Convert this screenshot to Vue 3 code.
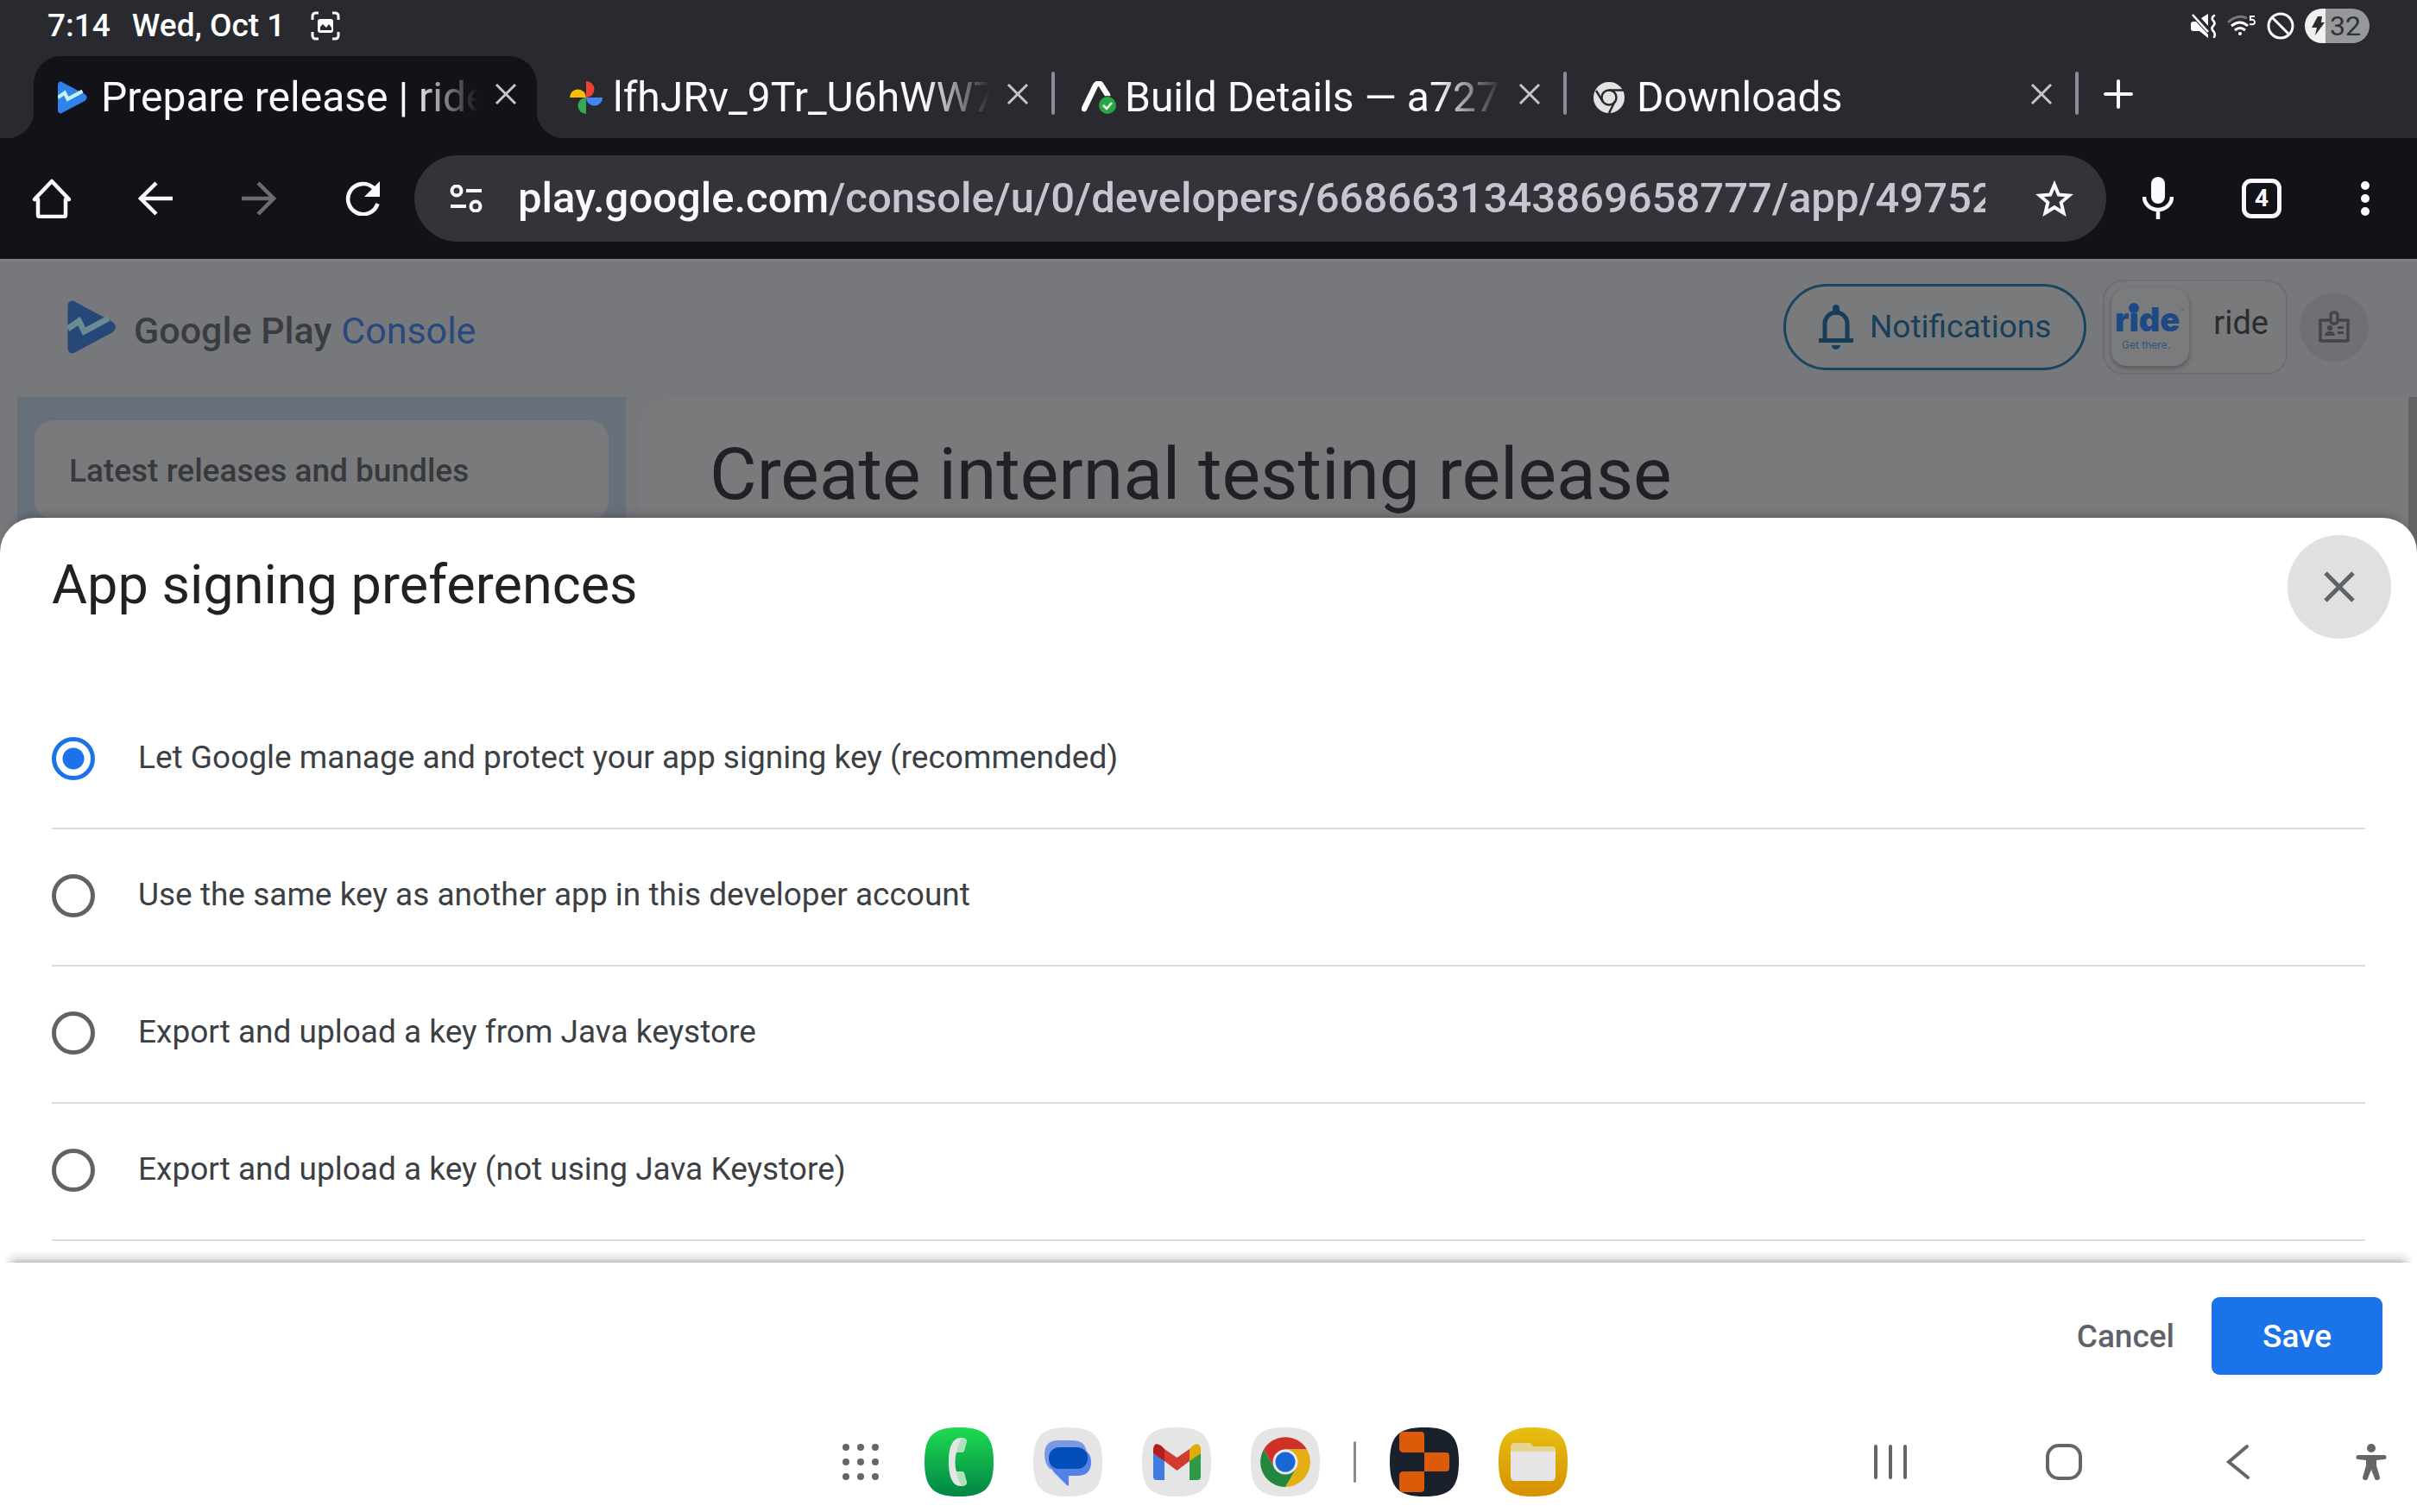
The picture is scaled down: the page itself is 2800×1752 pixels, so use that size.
<script setup>
import { ref } from 'vue'

const tabs = [
  { icon: 'play', title: 'Prepare release | ride', active: true },
  { icon: 'photos', title: 'lfhJRv_9Tr_U6hWW7_' },
  { icon: 'build', title: 'Build Details — a7277' },
  { icon: 'chrome', title: 'Downloads' }
]

const options = [
  { id: 'google', label: 'Let Google manage and protect your app signing key (recommended)' },
  { id: 'same', label: 'Use the same key as another app in this developer account' },
  { id: 'java', label: 'Export and upload a key from Java keystore' },
  { id: 'other', label: 'Export and upload a key (not using Java Keystore)' }
]
const selected = ref('google')
</script>

<template>
  <div class="screen">
    <header class="status">
      <div class="status-left">
        <span>7:14</span>
        <span>Wed, Oct 1</span>
        <svg class="capture" width="34" height="34" viewBox="0 0 34 34">
          <path d="M2 10V6q0-4 4-4h3M25 2h3q4 0 4 4v4M32 24v4q0 4-4 4h-3M9 32H6q-4 0-4-4v-4" fill="none" stroke="#fff" stroke-width="3" />
          <rect x="8" y="9" width="18" height="16" rx="3" fill="#fff" />
          <path d="M11 22v-4l3-3 4 4 3-4 3 4v3z" fill="#292a2f" />
        </svg>
      </div>
      <div class="status-right">
        <svg width="30" height="28" viewBox="0 0 30 28">
          <path d="M0 12q0-3 3-3h3l14 15v4l-10-8H3q-3 0-3-3zM12 5l8-5v14z" fill="#fff" />
          <path d="M2 1l18 20" stroke="#fff" stroke-width="2.600" />
          <path d="M27 2q-4 3-1 6t0 6 0 6 1 7" fill="none" stroke="#fff" stroke-width="2.600" stroke-linecap="round" />
        </svg>
        <svg class="wifi" width="34" height="26" viewBox="0 0 34 26">
          <path d="M1 9Q12-1 23 4" fill="none" stroke="#77787c" stroke-width="3" />
          <path d="M5 13q10-8 19 0M9 18q6-5 12 0" fill="none" stroke="#fff" stroke-width="3" />
          <circle cx="15" cy="22" r="2" fill="#fff" />
          <path d="M32 2h-5v4q5-1 5 3 0 3-6 2" fill="none" stroke="#fff" stroke-width="2" />
        </svg>
        <svg width="32" height="32" viewBox="0 0 32 32">
          <circle cx="16" cy="16" r="14" fill="none" stroke="#fff" stroke-width="3" />
          <path d="M6 6l20 20" stroke="#fff" stroke-width="3" />
        </svg>
        <div class="battery">
          <svg width="16" height="22" viewBox="0 0 16 22"><path d="M7 0h5l-1 7h4L4 22l2-9H0z" fill="#2b2c30" /></svg>
          <span>32</span>
        </div>
      </div>
    </header>

    <nav class="tabs" aria-label="Browser tabs">
      <div v-for="t in tabs" :key="t.title" class="tab" :class="{ active: t.active }">
        <span class="fav">
          <svg v-if="t.icon === 'play'" width="34" height="38" viewBox="0 0 56 62">
            <path d="M0 7C0 1 5-1 9 2l43 23q7 6 0 12L9 60c-4 3-9 1-9-5z" fill="#2f81ec" />
            <path d="M0 31l13-9 6 12 28-15" fill="none" stroke="#c6f0f7" stroke-width="7" />
          </svg>
          <svg v-else-if="t.icon === 'photos'" width="38" height="38" viewBox="0 0 38 38">
            <path d="M19 0a9.500 9.500 0 0 1 0 19z" fill="#ea4335" />
            <path d="M38 19a9.500 9.500 0 0 1-19 0z" fill="#4285f4" />
            <path d="M19 38a9.500 9.500 0 0 1 0-19z" fill="#34a853" />
            <path d="M0 19a9.500 9.500 0 0 1 19 0z" fill="#fbbc04" />
          </svg>
          <svg v-else-if="t.icon === 'build'" width="40" height="38" viewBox="0 0 40 38">
            <path d="M3 32L16 5q4-5 7 0l7 11" fill="none" stroke="#fff" stroke-width="6.500" stroke-linecap="round" />
            <circle cx="30" cy="28" r="11" fill="#292a2f" />
            <circle cx="30" cy="28" r="10" fill="#28a745" />
            <path d="M25 28l4 4 6-7" fill="none" stroke="#fff" stroke-width="2.500" />
          </svg>
          <svg v-else width="36" height="36" viewBox="0 0 36 36">
            <circle cx="18" cy="18" r="18" fill="#e3e3e3" />
            <circle cx="18" cy="18" r="8.500" fill="none" stroke="#292a2f" stroke-width="2.500" />
            <path d="M18 9.500h17M3 10l8 13M25 22l-7 14" stroke="#292a2f" stroke-width="2.500" />
          </svg>
        </span>
        <a href="#" class="tab-title">{{ t.title }}</a>
        <button class="tab-close" aria-label="Close tab">
          <svg width="26" height="26" viewBox="0 0 26 26"><path d="M2 2l22 22M24 2L2 24" stroke="#c6c5cc" stroke-width="3" /></svg>
        </button>
      </div>
      <button class="new-tab" aria-label="New tab">
        <svg width="34" height="34" viewBox="0 0 34 34"><path d="M17 2v30M2 17h30" stroke="#fbf8ff" stroke-width="4" stroke-linecap="round" /></svg>
      </button>
    </nav>

    <div class="toolbar">
      <button class="tool" aria-label="Home">
        <svg width="46" height="46" viewBox="0 0 46 46"><path d="M23 3L3 24h4v18q0 2 2 2h28q2 0 2-2V24h4z" fill="none" stroke="#fbf8ff" stroke-width="4.500" stroke-linejoin="round" /></svg>
      </button>
      <button class="tool" aria-label="Back">
        <svg width="40" height="40" viewBox="0 0 40 40"><path d="M40 20H3M21 2L3 20l18 18" fill="none" stroke="#fbf8ff" stroke-width="4.500" /></svg>
      </button>
      <button class="tool" aria-label="Forward">
        <svg width="40" height="40" viewBox="0 0 40 40"><path d="M0 20h37M19 2l18 18-18 18" fill="none" stroke="#6c6b72" stroke-width="4.500" /></svg>
      </button>
      <button class="tool" aria-label="Reload">
        <svg width="40" height="40" viewBox="0 0 40 40"><path d="M33 8A17.600 17.600 0 1 0 37.500 26" fill="none" stroke="#fbf8ff" stroke-width="4.600" /><path d="M40 0v18H22z" fill="#fbf8ff" /></svg>
      </button>
      <div class="omnibox">
        <svg width="38" height="32" viewBox="0 0 38 32">
          <g fill="none" stroke="#fbf8ff" stroke-width="4"><circle cx="8" cy="7" r="5.500" /><circle cx="30" cy="25" r="5.500" /><path d="M19 7h18M1 25h18" /></g>
        </svg>
        <div class="url" role="textbox" aria-label="Address"><b>play.google.com</b>/console/u/0/developers/6686631343869658777/app/49752</div>
        <button class="star" aria-label="Bookmark">
          <svg width="44" height="42" viewBox="0 0 44 42"><path d="M22 5l4.800 11.500L39 17.600l-9.300 8 2.900 12.200L22 31.200l-10.600 6.600 2.900-12.200-9.300-8 12.200-1.100z" fill="none" stroke="#fbf8ff" stroke-width="4" /></svg>
        </button>
      </div>
      <button class="tool" aria-label="Voice search">
        <svg width="36" height="50" viewBox="0 0 36 50"><rect x="10" y="0" width="16" height="31" rx="8" fill="#fbf8ff" /><path d="M2 23a16 15 0 0 0 32 0M18 38v11" fill="none" stroke="#fbf8ff" stroke-width="4.500" /></svg>
      </button>
      <button class="tool" aria-label="Open tabs"><span class="count">4</span></button>
      <button class="tool" aria-label="Menu">
        <svg width="10" height="40" viewBox="0 0 10 40" fill="#fbf8ff"><circle cx="5" cy="5" r="5" /><circle cx="5" cy="20" r="5" /><circle cx="5" cy="35" r="5" /></svg>
      </button>
    </div>

    <div class="page">
      <div class="page-head">
        <svg class="logo" width="57" height="62" viewBox="0 0 56 62">
          <path d="M0 7C0 1 5-1 9 2l43 23q7 6 0 12L9 60c-4 3-9 1-9-5z" fill="#264878" />
          <path d="M0 33l13-9 6 12 28-15" fill="none" stroke="#6a8b93" stroke-width="7" />
        </svg>
        <div class="brand">Google Play <span>Console</span></div>
        <button class="notif">
          <svg width="40" height="52" viewBox="0 0 40 52"><path d="M7 40V22a13 13 0 0 1 26 0v18" fill="none" stroke="#173f59" stroke-width="5" /><path d="M0 39h40v5H0z" fill="#173f59" /><rect x="16" y="0" width="8" height="12" rx="4" fill="#173f59" /><path d="M15 47h10a5 5 0 0 1-10 0z" fill="#173f59" /></svg>
          Notifications
        </button>
        <button class="app">
          <span class="app-icon">
            <svg width="90" height="90" viewBox="0 0 90 90">
              <text x="4" y="50" class="ride">ride</text>
              <circle cx="26" cy="23" r="6" fill="#1d4a84" />
              <text x="12" y="70" class="there">Get there.</text>
              <text x="80" y="29" class="tm">™</text>
            </svg>
          </span>
          <span class="app-name">ride</span>
        </button>
        <button class="badge" aria-label="Account">
          <svg width="36" height="38" viewBox="0 0 36 38">
            <g fill="none" stroke="#434446" stroke-width="3.500" stroke-linejoin="round"><path d="M13 11H2v24h32V11H23" /><rect x="14" y="2" width="8" height="13" rx="3" /></g>
            <circle cx="13" cy="20" r="3" fill="#434446" /><path d="M7 29q0-5 6-5t6 5zM22 18h7v3h-7zM22 24h7v3h-7z" fill="#434446" />
          </svg>
        </button>
      </div>
      <div class="page-body">
        <aside><a href="#" class="side-card">Latest releases and bundles</a></aside>
        <main><h1>Create internal testing release</h1></main>
      </div>
    </div>

    <section class="sheet" role="dialog" aria-labelledby="sheet-title">
      <div class="sheet-head">
        <h2 id="sheet-title">App signing preferences</h2>
        <button class="close" aria-label="Close">
          <svg width="36" height="36" viewBox="0 0 36 36"><path d="M2 2l32 32M34 2L2 34" stroke="#5f6368" stroke-width="5" /></svg>
        </button>
      </div>
      <div class="options">
        <label v-for="o in options" :key="o.id" class="option">
          <input v-model="selected" type="radio" name="signing" :value="o.id">
          <span>{{ o.label }}</span>
        </label>
      </div>
      <footer class="actions">
        <button class="cancel">Cancel</button>
        <button class="save">Save</button>
      </footer>
    </section>

    <nav class="taskbar" aria-label="System">
      <div class="apps">
        <a href="#" class="drawer" aria-label="All apps">
          <svg width="42" height="42" viewBox="0 0 42 42" fill="#666">
            <g v-for="y in [4, 21, 38]" :key="y"><circle v-for="x in [4, 21, 38]" :key="x" :cx="x" :cy="y" r="4" /></g>
          </svg>
        </a>
        <a href="#" aria-label="Phone">
          <svg width="80" height="80" viewBox="0 0 80 80">
            <defs><linearGradient id="gp" x2="0" y2="1"><stop stop-color="#1fdb50" /><stop offset="1" stop-color="#008446" /></linearGradient></defs>
            <path d="M40 0C70 0 80 10 80 40S70 80 40 80 0 70 0 40 10 0 40 0Z" fill="url(#gp)" />
            <path d="M42 12C32 12 28 24 28 40s4 28 14 28c4 0 7-2 7-4l-3-11q-1-2-3-2h-6c-2-6-2-16 0-22h6q2 0 3-2l3-11c0-2-3-4-7-4z" fill="#e5e5e5" />
            <path d="M43 12c4 0 6 2 6 4l-3 11q-1 2-3 2h-6c1-6 3-12 6-17zM43 68c4 0 6-2 6-4l-3-11q-1-2-3-2h-6c1 6 3 12 6 17z" fill="#b0dfbc" />
          </svg>
        </a>
        <a href="#" aria-label="Messages">
          <svg width="80" height="80" viewBox="0 0 80 80">
            <path d="M40 0C70 0 80 10 80 40S70 80 40 80 0 70 0 40 10 0 40 0Z" fill="#e5e5e5" />
            <path d="M29 15h17q14 0 16 14L32 48H19q-6-6-6-17 0-16 16-16z" fill="#7b98e4" />
            <path d="M18 42q2 5 6 10l15 15q2 2 2-1V56h10q16 0 16-16 0-8-5-12z" fill="#5480e8" />
            <rect x="18" y="23" width="45" height="25" rx="12" fill="#004fb8" />
          </svg>
        </a>
        <a href="#" aria-label="Gmail">
          <svg width="80" height="80" viewBox="0 0 80 80">
            <path d="M40 0C70 0 80 10 80 40S70 80 40 80 0 70 0 40 10 0 40 0Z" fill="#e5e5e5" />
            <path d="M13 30l13 8v23h-9q-4 0-4-4z" fill="#3f7be0" /><path d="M68 30l-13 8v23h9q4 0 4-4z" fill="#2f994a" />
            <path d="M26 25l14.500 10L55 25v14L40.500 50 26 39z" fill="#d23c30" />
            <path d="M13 25q1-9 9-4l4 4v14l-13-9z" fill="#b11f1c" /><path d="M68 25q-1-9-9-4l-4 4v14l13-9z" fill="#e1aa05" />
          </svg>
        </a>
        <a href="#" aria-label="Chrome">
          <svg width="80" height="80" viewBox="0 0 80 80">
            <path d="M40 0C70 0 80 10 80 40S70 80 40 80 0 70 0 40 10 0 40 0Z" fill="#e5e5e5" />
            <path d="M15 25.500a29 29 0 0 1 50 0H40L27.400 47.250z" fill="#cf3127" />
            <path d="M65 25.500A29 29 0 0 1 40 69l12.600-21.750L40 25.500z" fill="#e5ae12" />
            <path d="M40 69a29 29 0 0 1-25-43.500l12.400 21.750h25.200z" fill="#23883f" />
            <circle cx="40" cy="40" r="14.500" fill="#e8eaf0" /><circle cx="40" cy="40" r="11.500" fill="#1967d2" />
          </svg>
        </a>
        <i class="sep"></i>
        <a href="#" aria-label="Blocks">
          <svg width="80" height="80" viewBox="0 0 80 80">
            <defs><clipPath id="sq"><path d="M40 0C70 0 80 10 80 40S70 80 40 80 0 70 0 40 10 0 40 0Z" /></clipPath></defs>
            <g clip-path="url(#sq)"><path d="M0 0h80v80H0z" fill="#1a212d" />
              <path d="M16 5h20q4 0 4 4v20H16q-5 0-5-5V10q0-5 5-5zM40 29h25q4 0 4 4v14q0 4-4 4H40zM16 51h24v20q0 4-4 4H16q-5 0-5-5V56q0-5 5-5z" fill="#dc5a08" /></g>
          </svg>
        </a>
        <a href="#" aria-label="Files">
          <svg width="80" height="80" viewBox="0 0 80 80">
            <defs><linearGradient id="gf" x2="0" y2="1"><stop stop-color="#e7bf12" /><stop offset="1" stop-color="#d68f00" /></linearGradient></defs>
            <path d="M40 0C70 0 80 10 80 40S70 80 40 80 0 70 0 40 10 0 40 0Z" fill="url(#gf)" />
            <path d="M14 30v-7q0-5 5-5h16q3 0 5 4h22q4 0 4 4v4z" fill="#e5d391" /><path d="M14 28h52v28q0 6-5 6H19q-5 0-5-6z" fill="#e5e5e5" />
          </svg>
        </a>
      </div>
      <div class="keys">
        <button aria-label="Recents"><svg width="40" height="40" viewBox="0 0 40 40"><path d="M3 2v36M20 2v36M37 2v36" stroke="#666" stroke-width="4" stroke-linecap="round" /></svg></button>
        <button aria-label="Home"><svg width="42" height="42" viewBox="0 0 42 42"><rect x="2" y="2" width="38" height="38" rx="13" fill="none" stroke="#666" stroke-width="4" /></svg></button>
        <button aria-label="Back"><svg width="40" height="42" viewBox="0 0 40 42"><path d="M31 3L10 21l22 18" fill="none" stroke="#666" stroke-width="4" stroke-linecap="round" /></svg></button>
        <button class="a11y" aria-label="Accessibility"><svg width="36" height="42" viewBox="0 0 36 42" fill="#666"><circle cx="18" cy="5" r="5" /><path d="M3 13h30a2.500 2.500 0 0 1 0 5l-9 1v6l4 14q0 3-3 3t-3-2l-4-10-4 10q0 2-3 2t-3-3l4-14v-6l-9-1a2.500 2.500 0 0 1 0-5z" /></svg></button>
      </div>
    </nav>
  </div>
</template>

<style>
body { margin: 0; background: #fff; }
</style>

<style scoped>
* { box-sizing: border-box; }
.screen { min-height: 100vh; display: flex; flex-direction: column; font-family: Roboto, "Open Sans", sans-serif; overflow: hidden; background: #fff; }
button { border: 0; padding: 0; background: none; font: inherit; color: inherit; }
a { color: inherit; text-decoration: none; }
svg { display: block; flex: none; }
h1, h2 { margin: 0; font-weight: 400; color: #202124; }

.status { height: 60px; padding: 0 55px; display: flex; justify-content: space-between; align-items: center; background: #292a2f; color: #fff; font-size: 37px; font-weight: 500; line-height: 60px; }
.status-left, .status-right { display: flex; align-items: center; }
.status-left { gap: 25px; }
.capture { margin-left: 5px; }
.status-right { gap: 12px; }
.battery { width: 75px; height: 40px; padding: 0 10px 0 8px; border-radius: 20px; display: flex; align-items: center; justify-content: space-between; background: linear-gradient(90deg, #f0f0f0 24px, #97989a 24px); color: #303135; font-size: 32px; font-weight: 400; line-height: 40px; }

.tabs { height: 100px; padding: 5px 0 0 34px; display: flex; background: #292a2f; color: #fbf8ff; }
.tab { position: relative; flex: 0 1 593px; min-width: 0; padding: 0 28px 0 33px; display: flex; align-items: center; }
.tab + .tab::after { content: ""; position: absolute; right: -2px; top: 18px; width: 4px; height: 50px; border-radius: 2px; background: #8a8b96; }
.active::before { content: ""; position: absolute; inset: 0 5px; border-radius: 32px 32px 0 0; background: #121318; }
.active::after { content: ""; position: absolute; bottom: 0; left: -27px; right: -27px; height: 32px; background: radial-gradient(circle at 0 0, transparent 32px, #121318 33px) left / 32px 32px no-repeat, radial-gradient(circle at 100% 0, transparent 32px, #121318 33px) right / 32px 32px no-repeat; }
.fav { position: relative; flex: none; width: 50px; }
.tab-title { position: relative; flex: 1; min-width: 0; overflow: hidden; white-space: nowrap; font-size: 48px; line-height: 64px; mask-image: linear-gradient(90deg, #000 calc(100% - 76px), transparent); }
.tab-close { position: relative; margin: 0 0 8px 19px; }
.new-tab { margin: 0 0 8px 31px; }

.toolbar { height: 140px; display: flex; align-items: center; background: #121318; }
.tool { flex: 0 0 120px; height: 100px; display: flex; align-items: center; justify-content: center; }
.omnibox { flex: 1; min-width: 0; height: 100px; padding: 0 38px 0 41px; border-radius: 50px; display: flex; align-items: center; background: #33343a; }
.url { flex: 1; min-width: 0; margin: 0 58px 0 41px; overflow: hidden; white-space: nowrap; font-size: 49px; line-height: 80px; font-weight: 500; color: #c7c5d0; }
.url b { font-weight: 500; color: #fbf8ff; }
.count { width: 46px; height: 46px; border: 5px solid #fbf8ff; border-radius: 11px; color: #fbf8ff; font-size: 28px; font-weight: 700; line-height: 36px; text-align: center; }

.page { border-top: 3px solid #7f808a; background: #77787c; }
.page-head { height: 157px; padding: 0 56px 6px 78px; display: flex; align-items: center; color: #3a3d40; }
.brand { flex: 1; margin: 8px 0 0 20px; font-size: 43px; font-weight: 500; line-height: 60px; }
.brand span { color: #27497b; font-weight: 400; }
.notif { height: 100px; padding: 0 38px; border: 3px solid #1a455f; border-radius: 50px; display: flex; align-items: center; gap: 19px; background: #797a7c; color: #173f59; font-size: 37px; font-weight: 400; }
.app { height: 110px; margin-left: 19px; padding: 0 20px 0 8px; border: 2px solid #6d6e72; border-radius: 24px; display: flex; align-items: center; gap: 28px; background: #797a7c; color: #2b2c2f; font-size: 38px; }
.app-icon { border-radius: 18px; background: #7a7b7d; box-shadow: 0 3px 6px #55565a; }
.app-name { padding-bottom: 10px; }
.ride { font: 900 38px Inter, sans-serif; fill: #1d4a84; }
.there { font: 400 12px Inter, sans-serif; fill: #2b5682; }
.tm { font: 400 6px Inter, sans-serif; fill: #2b5682; }
.badge { width: 80px; height: 80px; margin-left: 14px; border-radius: 50%; display: flex; align-items: center; justify-content: center; background: #6f7074; }
.page-body { display: flex; gap: 15px; padding-left: 20px; }
aside { flex: 0 0 705px; padding: 27px 20px 38px; background: #676f7b; }
.side-card { display: block; height: 115px; padding: 0 40px; border-radius: 22px; background: #797a7c; color: #38393c; font-size: 37px; font-weight: 500; line-height: 118px; }
main { flex: 1; padding: 40px 82px 40px; border-radius: 40px 0 0 0; background: #797a7c; box-shadow: inset -10px 0 #626365; }
h1 { font-size: 84px; line-height: 100px; }

.sheet { position: relative; margin-top: -40px; border-radius: 40px 40px 0 0; background: #fff; box-shadow: 0 -12px 12px -12px #4c4d50; }
.sheet-head { padding: 20px 30px 62px 60px; display: flex; justify-content: space-between; }
h2 { font-size: 63px; line-height: 116px; }
.close { width: 120px; height: 120px; border-radius: 50%; display: flex; align-items: center; justify-content: center; background: #e0e0e0; }
.options { padding: 0 60px 25px; overflow: hidden; }
.option { height: 159px; padding-bottom: 3px; border-bottom: 2px solid #dadbde; display: flex; align-items: center; gap: 50px; color: #3c4043; font-size: 37px; line-height: 48px; }
.option span { padding-bottom: 2px; }
.option input { appearance: none; width: 50px; height: 50px; margin: 0; border: 5px solid #5f6368; border-radius: 50%; }
.option input:checked { border-color: #1a73e8; background: radial-gradient(circle, #1a73e8 12px, transparent 13px); }
.actions { position: relative; height: 170px; padding: 0 40px 0; display: flex; align-items: center; justify-content: flex-end; gap: 43px; background: #fff; font-size: 37px; font-weight: 500; }
.actions::before { content: ""; position: absolute; left: 4px; right: 4px; top: -14px; height: 14px; background: linear-gradient(0deg, #bfbfbf, #e6e6e6 35%, rgba(255, 255, 255, 0)); mask-image: linear-gradient(90deg, transparent, #000 16px, #000 calc(100% - 16px), transparent); }
.cancel { color: #5f6368; height: 90px; }
.save { width: 198px; height: 90px; border-radius: 9px; background: #1a73e8; color: #fff; }

.taskbar { flex: 1; min-height: 119px; padding: 3px 9px 0 0; display: grid; grid-template-columns: 1fr auto 1fr; align-items: center; }
.apps { grid-column: 2; display: flex; align-items: center; gap: 46px; }
.drawer { margin-right: 7px; }
.sep { width: 3px; height: 48px; margin: 0 -7px; border-radius: 2px; background: #8c8c8c; }
.keys { display: flex; align-items: center; justify-content: flex-end; gap: 160px; padding-right: 26px; }
.a11y { margin-left: -43px; }
</style>
